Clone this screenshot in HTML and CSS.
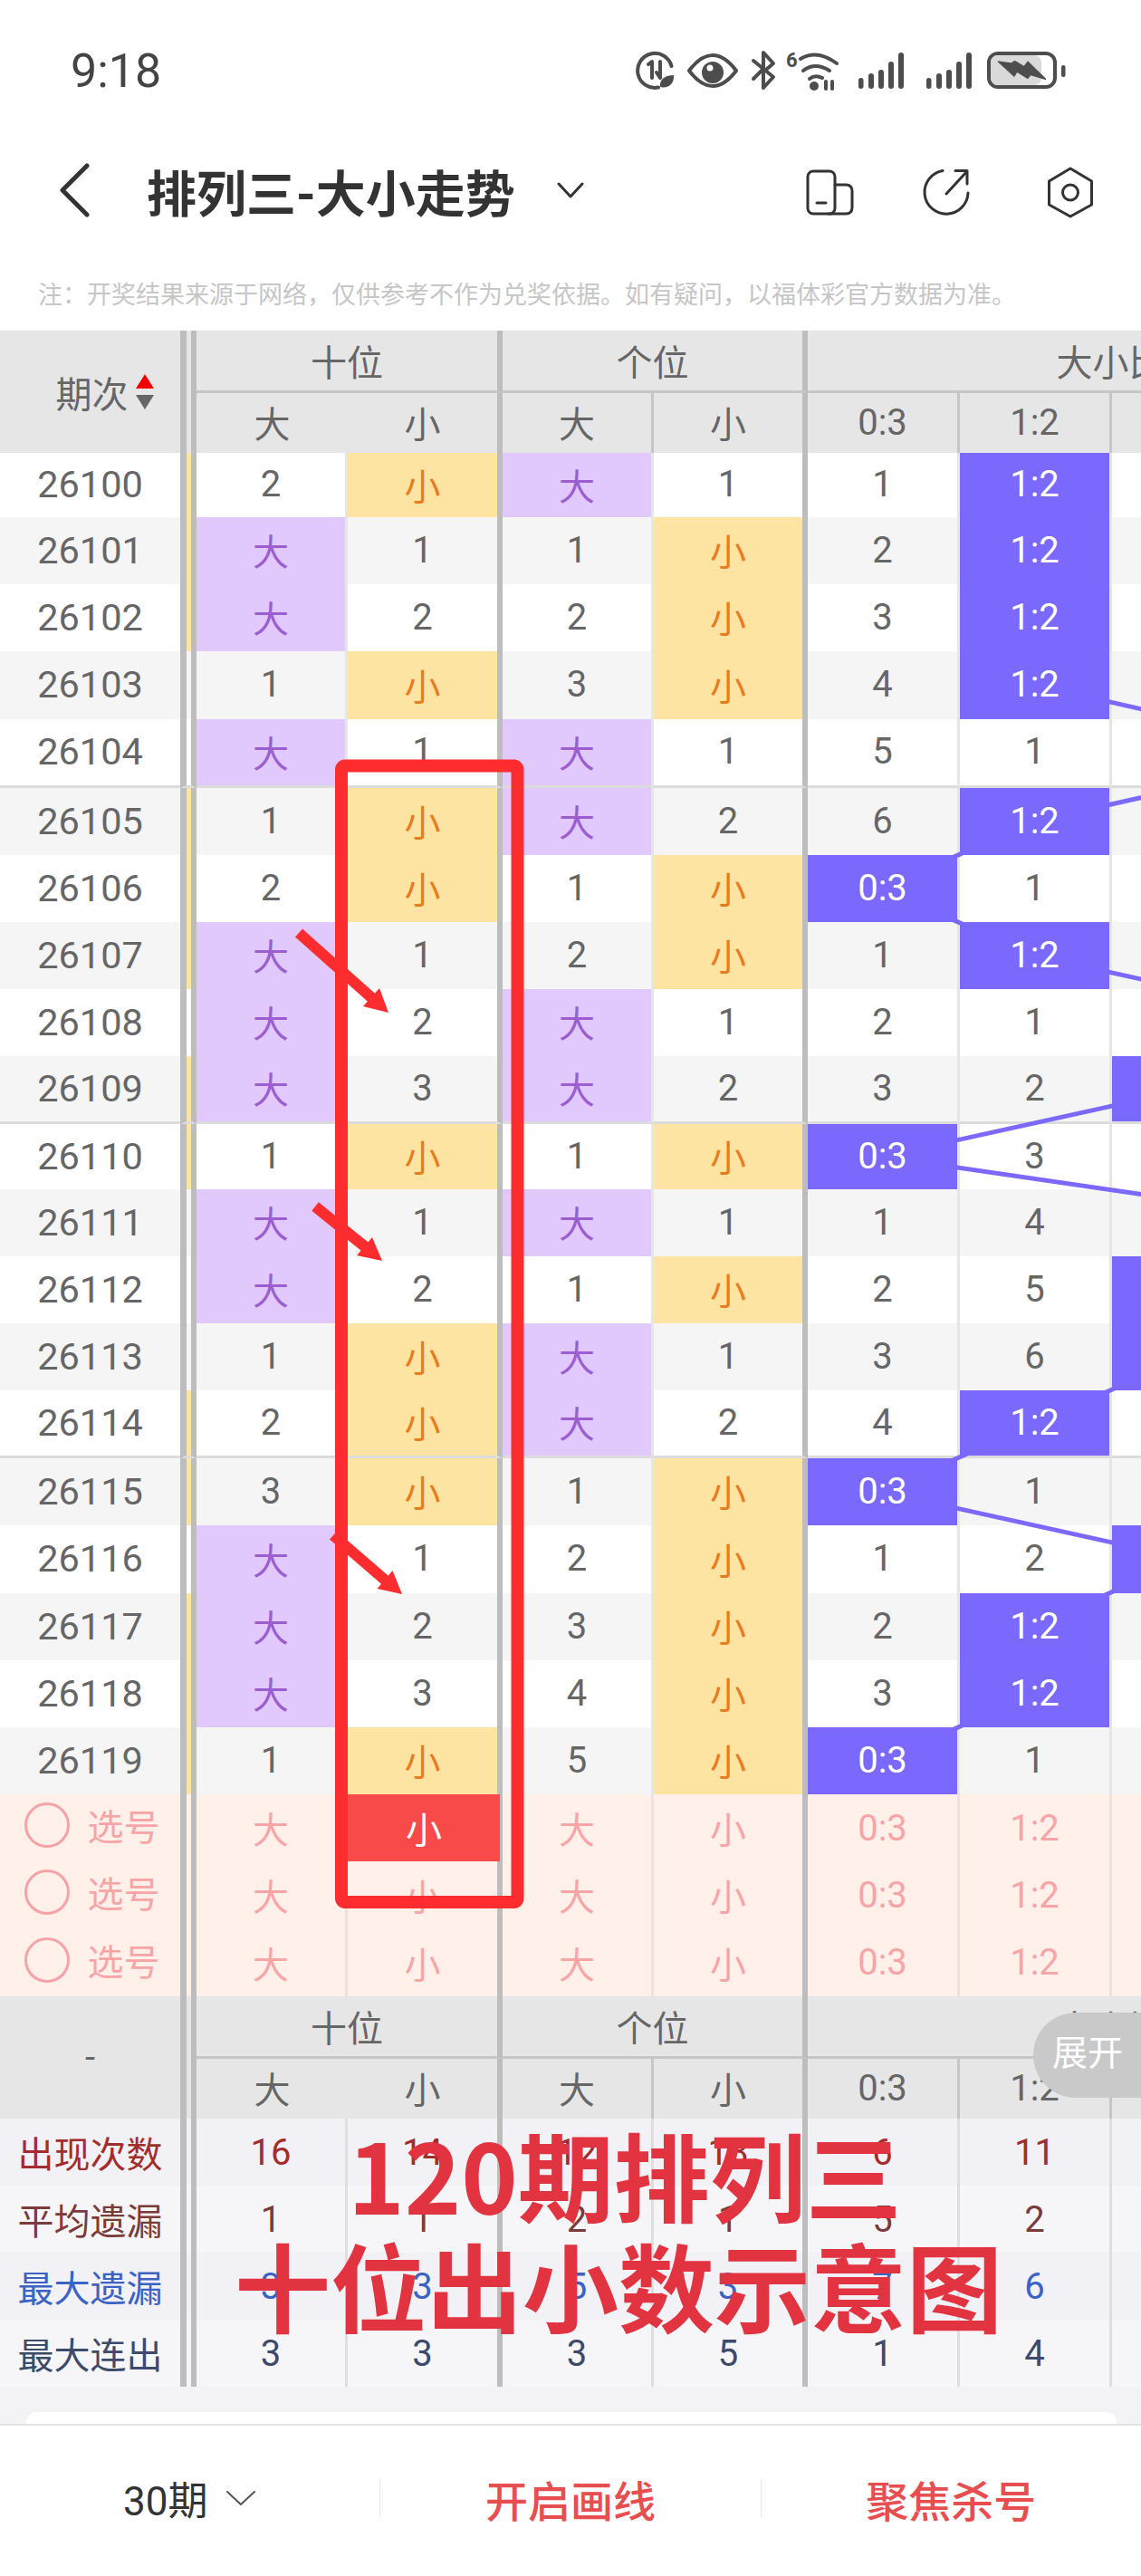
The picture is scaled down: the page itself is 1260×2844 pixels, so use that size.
FILE: index.html
```html
<!DOCTYPE html>
<html lang="zh-CN">

<head>
  <meta charset="UTF-8">
  <meta name="viewport" content="width=device-width, initial-scale=1.0">
  <title>排列三-大小走势</title>
  <link rel="stylesheet" href="styles.css">
</head>

<body>
  <div class="statusbar">
    <div class="time">9:18</div>
    <svg class="status-icons" width="520" height="70" viewBox="0 0 520 70">
      <g fill="none" stroke="#4d4d4d" stroke-width="4" stroke-linecap="round" stroke-linejoin="round">
        <path d="M61.5 43A19 19 0 1 0 47 66.5"/>
        <path d="M36 41l4-3v18M49 38v18M45 50l4 6"/>
        <path d="M81 48C90 36 98 31 107 31S124 36 133 48C124 60 116 65 107 65S90 60 81 48Z"/>
        <path d="M152 37L174 55L163 67V50M152 57L163 46V28L174 40L167 46"/>
        <path d="M204 35Q222 24 244 40M207 48Q220 38 236 48M214 57Q220 52 228 56"/>
        <path d="M232 60v8M239 60v8"/>
        <rect x="412" y="29" width="73" height="37" rx="10"/>
      </g>
      <g fill="#4d4d4d">
        <path d="M49 66C48 57 55 53 64 53C65 62 58 68 49 66Z"/>
        <circle cx="107" cy="50" r="12"/>
        <circle cx="219" cy="65" r="5"/>
        <rect x="268" y="56" width="5.5" height="12" rx="2.7"/>
        <rect x="279" y="51" width="6" height="17" rx="3"/>
        <rect x="290" y="47" width="6" height="21" rx="3"/>
        <rect x="301" y="38" width="6" height="30" rx="3"/>
        <rect x="312" y="28" width="6" height="40" rx="3"/>
        <rect x="343" y="56" width="5.5" height="12" rx="2.7"/>
        <rect x="354" y="51" width="6" height="17" rx="3"/>
        <rect x="365" y="47" width="6" height="21" rx="3"/>
        <rect x="376" y="38" width="6" height="30" rx="3"/>
        <rect x="387" y="28" width="6" height="40" rx="3"/>
        <rect x="492" y="42" width="4.5" height="13" rx="2"/>
      </g>
      <circle cx="104" cy="45" r="3.5" fill="#fff"/>
      <text x="188" y="44" class="wifi-six">6</text>
      <rect x="414" y="31" width="56" height="33" rx="8" fill="#d9d9d9"/>
      <path fill="#4d4d4d" d="M421.7 37.3L436.7 39.3L440.7 36.7L450.7 42.7L455 37.3L475 56.7V58.3L458.3 53.3L455 57.3L443.3 50L440 55L421.7 38.3Z"/>
    </svg>
  </div>

  <div class="nav">
    <svg class="back" width="40" height="60" viewBox="0 0 40 60">
      <path d="M36 3L9 30L36 57" fill="none" stroke="#333" stroke-width="5" stroke-linecap="round" stroke-linejoin="round"/>
    </svg>
    <div class="title">排列三-大小走势</div>
    <svg class="title-arrow" width="30" height="18" viewBox="0 0 30 18">
      <path d="M2 2L15 16L28 2" fill="none" stroke="#333" stroke-width="3" stroke-linecap="round" stroke-linejoin="round"/>
    </svg>
    <svg class="nav-icons" width="400" height="80" viewBox="0 0 400 80">
      <g fill="none" stroke="#333" stroke-width="3" stroke-linecap="round" stroke-linejoin="round">
        <rect x="32" y="19" width="30" height="47" rx="6"/>
        <path d="M62 34H74Q81 34 81 41V59Q81 66 74 66H55"/>
        <path d="M42 54H52"/>
        <path d="M181 18.5A24 24 0 1 0 209 43"/>
        <path d="M185 44L208 19M195 18.5H208V33"/>
        <path d="M322 16L345.5 30V56L322 69L298.5 56V30Z"/>
        <circle cx="322" cy="42.5" r="8.5"/>
      </g>
    </svg>
  </div>

  <div class="notice">注：开奖结果来源于网络，仅供参考不作为兑奖依据。如有疑问，以福体彩官方数据为准。</div>

  <div class="chart">
    <table class="trend">
      <colgroup>
        <col class="c-no"><col class="c-sep"><col class="c-a"><col class="c-b"><col class="c-a"><col class="c-c"><col class="c-d"><col class="c-d"><col class="c-d"><col class="c-d">
      </colgroup>
      <thead>
        <tr class="head-top">
          <th rowspan="2"><span class="sort-head">期次<span class="sort"><i class="up"></i><i class="down"></i></span></span></th>
          <th rowspan="2" class="sep"></th>
          <th colspan="2" class="wall">十位</th>
          <th colspan="2" class="wall">个位</th>
          <th colspan="4">大小比</th>
        </tr>
        <tr class="head-sub">
          <th>大</th><th class="wall">小</th><th>大</th><th class="wall">小</th><th>0:3</th><th>1:2</th><th></th><th></th>
        </tr>
      </thead>
      <tbody class="draws">
        <tr><td>26100</td><td class="sep y"></td><td>2</td><td class="s wall">小</td><td class="b">大</td><td class="wall">1</td><td>1</td><td class="h"><span>1:2</span></td><td></td><td></td></tr>
        <tr><td>26101</td><td class="sep y"></td><td class="b">大</td><td class="wall">1</td><td>1</td><td class="s wall">小</td><td>2</td><td class="h"><span>1:2</span></td><td></td><td></td></tr>
        <tr><td>26102</td><td class="sep y"></td><td class="b">大</td><td class="wall">2</td><td>2</td><td class="s wall">小</td><td>3</td><td class="h"><span>1:2</span></td><td></td><td></td></tr>
        <tr><td>26103</td><td class="sep"></td><td>1</td><td class="s wall">小</td><td>3</td><td class="s wall">小</td><td>4</td><td class="h"><span>1:2</span></td><td></td><td></td></tr>
        <tr class="five"><td>26104</td><td class="sep"></td><td class="b">大</td><td class="wall">1</td><td class="b">大</td><td class="wall">1</td><td>5</td><td>1</td><td></td><td></td></tr>
        <tr><td>26105</td><td class="sep y"></td><td>1</td><td class="s wall">小</td><td class="b">大</td><td class="wall">2</td><td>6</td><td class="h"><span>1:2</span></td><td></td><td></td></tr>
        <tr><td>26106</td><td class="sep y"></td><td>2</td><td class="s wall">小</td><td>1</td><td class="s wall">小</td><td class="h"><span>0:3</span></td><td>1</td><td></td><td></td></tr>
        <tr><td>26107</td><td class="sep y"></td><td class="b">大</td><td class="wall">1</td><td>2</td><td class="s wall">小</td><td>1</td><td class="h"><span>1:2</span></td><td></td><td></td></tr>
        <tr><td>26108</td><td class="sep"></td><td class="b">大</td><td class="wall">2</td><td class="b">大</td><td class="wall">1</td><td>2</td><td>1</td><td></td><td></td></tr>
        <tr class="five"><td>26109</td><td class="sep y"></td><td class="b">大</td><td class="wall">3</td><td class="b">大</td><td class="wall">2</td><td>3</td><td>2</td><td class="h"></td><td></td></tr>
        <tr><td>26110</td><td class="sep y"></td><td>1</td><td class="s wall">小</td><td>1</td><td class="s wall">小</td><td class="h"><span>0:3</span></td><td>3</td><td></td><td></td></tr>
        <tr><td>26111</td><td class="sep"></td><td class="b">大</td><td class="wall">1</td><td class="b">大</td><td class="wall">1</td><td>1</td><td>4</td><td></td><td></td></tr>
        <tr><td>26112</td><td class="sep"></td><td class="b">大</td><td class="wall">2</td><td>1</td><td class="s wall">小</td><td>2</td><td>5</td><td class="h"></td><td></td></tr>
        <tr><td>26113</td><td class="sep"></td><td>1</td><td class="s wall">小</td><td class="b">大</td><td class="wall">1</td><td>3</td><td>6</td><td class="h"></td><td></td></tr>
        <tr class="five"><td>26114</td><td class="sep y"></td><td>2</td><td class="s wall">小</td><td class="b">大</td><td class="wall">2</td><td>4</td><td class="h"><span>1:2</span></td><td></td><td></td></tr>
        <tr><td>26115</td><td class="sep y"></td><td>3</td><td class="s wall">小</td><td>1</td><td class="s wall">小</td><td class="h"><span>0:3</span></td><td>1</td><td></td><td></td></tr>
        <tr><td>26116</td><td class="sep"></td><td class="b">大</td><td class="wall">1</td><td>2</td><td class="s wall">小</td><td>1</td><td>2</td><td class="h"></td><td></td></tr>
        <tr><td>26117</td><td class="sep y"></td><td class="b">大</td><td class="wall">2</td><td>3</td><td class="s wall">小</td><td>2</td><td class="h"><span>1:2</span></td><td></td><td></td></tr>
        <tr><td>26118</td><td class="sep y"></td><td class="b">大</td><td class="wall">3</td><td>4</td><td class="s wall">小</td><td>3</td><td class="h"><span>1:2</span></td><td></td><td></td></tr>
        <tr><td>26119</td><td class="sep y"></td><td>1</td><td class="s wall">小</td><td>5</td><td class="s wall">小</td><td class="h"><span>0:3</span></td><td>1</td><td></td><td></td></tr>
      </tbody>
      <tbody class="picker">
        <tr><td><span class="pick-label"><i class="radio"></i>选号</span></td><td class="sep"></td><td>大</td><td class="wall chosen">小</td><td>大</td><td class="wall">小</td><td>0:3</td><td>1:2</td><td></td><td></td></tr>
        <tr><td><span class="pick-label"><i class="radio"></i>选号</span></td><td class="sep"></td><td>大</td><td class="wall">小</td><td>大</td><td class="wall">小</td><td>0:3</td><td>1:2</td><td></td><td></td></tr>
        <tr class="tall"><td><span class="pick-label"><i class="radio"></i>选号</span></td><td class="sep"></td><td>大</td><td class="wall">小</td><td>大</td><td class="wall">小</td><td>0:3</td><td>1:2</td><td></td><td></td></tr>
      </tbody>
      <tbody class="foot-head">
        <tr class="head-top">
          <th rowspan="2">-</th>
          <th rowspan="2" class="sep"></th>
          <th colspan="2" class="wall">十位</th>
          <th colspan="2" class="wall">个位</th>
          <th colspan="4">大小比</th>
        </tr>
        <tr class="head-sub">
          <th>大</th><th class="wall">小</th><th>大</th><th class="wall">小</th><th>0:3</th><th>1:2</th><th></th><th></th>
        </tr>
      </tbody>
      <tbody class="stats">
        <tr class="st-count"><td>出现次数</td><td class="sep"></td><td>16</td><td class="wall">14</td><td>12</td><td class="wall">18</td><td>6</td><td>11</td><td></td><td></td></tr>
        <tr class="st-avg"><td>平均遗漏</td><td class="sep"></td><td>1</td><td class="wall">1</td><td>2</td><td class="wall">1</td><td>5</td><td>2</td><td></td><td></td></tr>
        <tr class="st-miss"><td>最大遗漏</td><td class="sep"></td><td>3</td><td class="wall">3</td><td>5</td><td class="wall">3</td><td>7</td><td>6</td><td></td><td></td></tr>
        <tr class="st-run"><td>最大连出</td><td class="sep"></td><td>3</td><td class="wall">3</td><td>3</td><td class="wall">5</td><td>1</td><td>4</td><td></td><td></td></tr>
      </tbody>
    </table>

    <!-- viewBox uses page coordinates, the chart starts at y=365 -->
    <svg class="trend-line" width="1260" height="2270" viewBox="0 365 1260 2270">
      <polyline fill="none" stroke="#7b69fe" stroke-width="5" points="1142,535 1142,756 1478,832 1142,907 974,981 1142,1055 1478,1129 1310,1203 974,1277 1478,1350 1310,1424 1310,1498 1142,1572 974,1647 1310,1721 1142,1796 1142,1870 974,1944"/>
    </svg>

    <svg class="marks" width="1260" height="2270" viewBox="0 365 1260 2270">
      <rect x="377" y="845.5" width="194.5" height="1254.5" rx="4" fill="none" stroke="#fd2d2f" stroke-width="14"/>
      <g fill="#fd2d2f">
        <polygon points="429,1118 419,1091 401,1111"/>
        <polygon points="422,1392 411,1366 394,1386"/>
        <polygon points="444,1760 433.5,1734 416.5,1754"/>
      </g>
      <g stroke="#fd2d2f" stroke-width="12">
        <line x1="330" y1="1030" x2="412" y2="1103"/>
        <line x1="348" y1="1332" x2="405" y2="1378"/>
        <line x1="368" y1="1695" x2="427" y2="1746"/>
      </g>
    </svg>

    <div class="caption">
      <div class="caption-top">120期排列三</div>
      <div>十位出小数示意图</div>
    </div>

    <div class="expand">展开</div>
  </div>

  <div class="gap">
    <div class="gap-card"></div>
  </div>

  <div class="bottombar">
    <div class="bar-item period">30期
      <svg width="34" height="18" viewBox="0 0 34 18">
        <path d="M2 2L17 16L32 2" fill="none" stroke="#555" stroke-width="2" stroke-linecap="round" stroke-linejoin="round"/>
      </svg>
    </div>
    <div class="bar-item action">开启画线</div>
    <div class="bar-item action">聚焦杀号</div>
  </div>
</body>

</html>
```

FILE: styles.css
```css
* {
  box-sizing: border-box;
}

body {
  margin: 0;
  width: 1260px;
  height: 2844px;
  overflow: hidden;
  background: white;
  color: #666;
  font-family: Roboto, "Noto Sans CJK SC", sans-serif;
}

.statusbar {
  height: 130px;
  padding: 30px 60px 0 78px;
  display: flex;
  justify-content: space-between;
  align-items: flex-start;
}

.time {
  font-size: 52px;
  line-height: 98px;
  color: #444;
}

.wifi-six {
  font-family: Roboto, sans-serif;
  font-size: 22px;
  font-weight: 700;
  fill: #4d4d4d;
}

.nav {
  height: 160px;
  padding-left: 60px;
  display: flex;
  align-items: center;
}

.title {
  margin-left: 62px;
  font-size: 55px;
  font-weight: 700;
  color: #333;
  white-space: nowrap;
}

.title-arrow {
  margin-left: 46px;
}

.nav-icons {
  margin-left: auto;
}

.notice {
  height: 75px;
  padding-left: 42px;
  line-height: 73px;
  font-size: 27px;
  color: #c6c6c6;
  white-space: nowrap;
}

.chart {
  position: relative;
  height: 2270px;
  overflow: hidden;
}

.trend {
  width: 1564px;
  table-layout: fixed;
  border-collapse: separate;
  border-spacing: 0;
  font-size: 40px;
  text-align: center;
}

.c-no { width: 199px; }
.c-sep { width: 18px; }
.c-a { width: 167px; }
.c-b { width: 171px; }
.c-c { width: 170px; }
.c-d { width: 168px; }

.trend th,
.trend td {
  padding: 0;
  font-weight: 400;
  border-right: 3px solid #e6e6e6;
  white-space: nowrap;
}

.trend th:first-child,
.trend td:first-child {
  border-right: 0;
}

.draws td:first-child {
  font-size: 41.5px;
}

.trend th {
  background: #e6e6e6;
  border-right-color: #c6c6c6;
}

.trend .sep {
  border-left: 7px solid #bdbdbd;
  border-right: 6px solid #bdbdbd;
}

.trend .sep.y {
  background: #fee4a2;
}

.trend .wall {
  border-right: 6px solid #bdbdbd;
}

.head-top {
  height: 69px;
}

.head-top th:not(:first-child):not(.sep) {
  border-bottom: 3px solid #c6c6c6;
}

.head-sub {
  height: 66px;
}

.head-sub th {
  padding-bottom: 2px;
}

.sort-head {
  display: inline-flex;
  align-items: center;
  gap: 8px;
  padding-left: 32px;
}

.sort {
  display: flex;
  flex-direction: column;
  gap: 7px;
}

.sort i {
  display: block;
  border-left: 10px solid transparent;
  border-right: 10px solid transparent;
}

.sort .up {
  border-bottom: 16px solid #f00000;
}

.sort .down {
  border-top: 16px solid #666;
}

.draws tr {
  height: 74px;
  background: white;
}

.draws tr:nth-child(even) {
  background: #f5f5f5;
}

/* rows are not all the same height in the app */
.draws tr:nth-child(1) { height: 71px; }
.draws tr:nth-child(4) { height: 75px; }
.draws tr:nth-child(5) { height: 76px; }
.draws tr:nth-child(10) { height: 75px; }
.draws tr:nth-child(11) { height: 72px; }
.draws tr:nth-child(15) { height: 75px; }
.draws tr:nth-child(17) { height: 75px; }

.draws td {
  padding-bottom: 2px;
}

.five td {
  border-bottom: 3px solid #dcdcdc;
}

.trend .b {
  background: #e1c8fd;
  color: #9a5ed0;
}

.trend .s {
  background: #fee4a2;
  color: #e87c1e;
}

.trend .h {
  background: #7b69fe;
  color: white;
}

.h span {
  position: relative;
  z-index: 2;
}

.picker tr {
  height: 74px;
  background: #fff0ea;
  color: #f8a5a8;
}

.picker .tall {
  height: 75px;
}

.picker td {
  border-right-color: #ece3df;
}

.picker td.chosen {
  background: #f94a4a;
  color: white;
  border-right-width: 3px;
}

.pick-label {
  display: inline-flex;
  align-items: center;
  gap: 20px;
  margin-left: 4px;
}

.radio {
  display: block;
  width: 50px;
  height: 50px;
  border: 3px solid #f5a3a6;
  border-radius: 50%;
}

.stats tr {
  height: 74px;
}

.stats td {
  border-right-color: #dedede;
}

.st-count { background: #f1f1f6; color: #a32d2d; }
.st-avg { background: #f6f6f8; color: #7a3b3b; }
.st-miss { background: #f1f1f6; color: #3a63c4; }
.st-run { background: #f6f6f8; color: #3d4a6b; }

.trend-line,
.marks {
  position: absolute;
  top: 0;
  left: 0;
}

.trend-line {
  z-index: 1;
}

.marks {
  z-index: 3;
}

.caption {
  position: absolute;
  z-index: 4;
  top: 1973px;
  left: 233px;
  width: 900px;
  font-size: 106px;
  line-height: 122px;
  font-weight: 700;
  font-family: "Noto Sans CJK SC", sans-serif;
  color: #e13340;
  text-align: center;
  white-space: nowrap;
}

.caption-top {
  padding-left: 14px;
}

.expand {
  position: absolute;
  z-index: 4;
  top: 1857px;
  right: 0;
  width: 119px;
  height: 94px;
  padding-left: 21px;
  border-radius: 47px 0 0 47px;
  background: #c9c9c9;
  color: white;
  font-size: 39px;
  line-height: 90px;
  white-space: nowrap;
}

.gap {
  height: 41px;
  padding: 28px 27px 0 29px;
  background: #f3f3f6;
}

.gap-card {
  height: 13px;
  background: white;
  border-radius: 12px 12px 0 0;
}

.bottombar {
  height: 168px;
  padding-bottom: 6px;
  border-top: 2px solid #e2e2e2;
  display: flex;
  align-items: center;
  background: white;
}

.bar-item {
  flex: 1;
  height: 42px;
  display: flex;
  align-items: center;
  justify-content: center;
  gap: 20px;
  border-right: 1px solid #e6e6e6;
}

.bar-item:last-child {
  border-right: 0;
}

.period {
  font-size: 44px;
  color: #333;
}

.action {
  font-size: 47px;
  font-weight: 500;
  color: #e84d4f;
}
```
